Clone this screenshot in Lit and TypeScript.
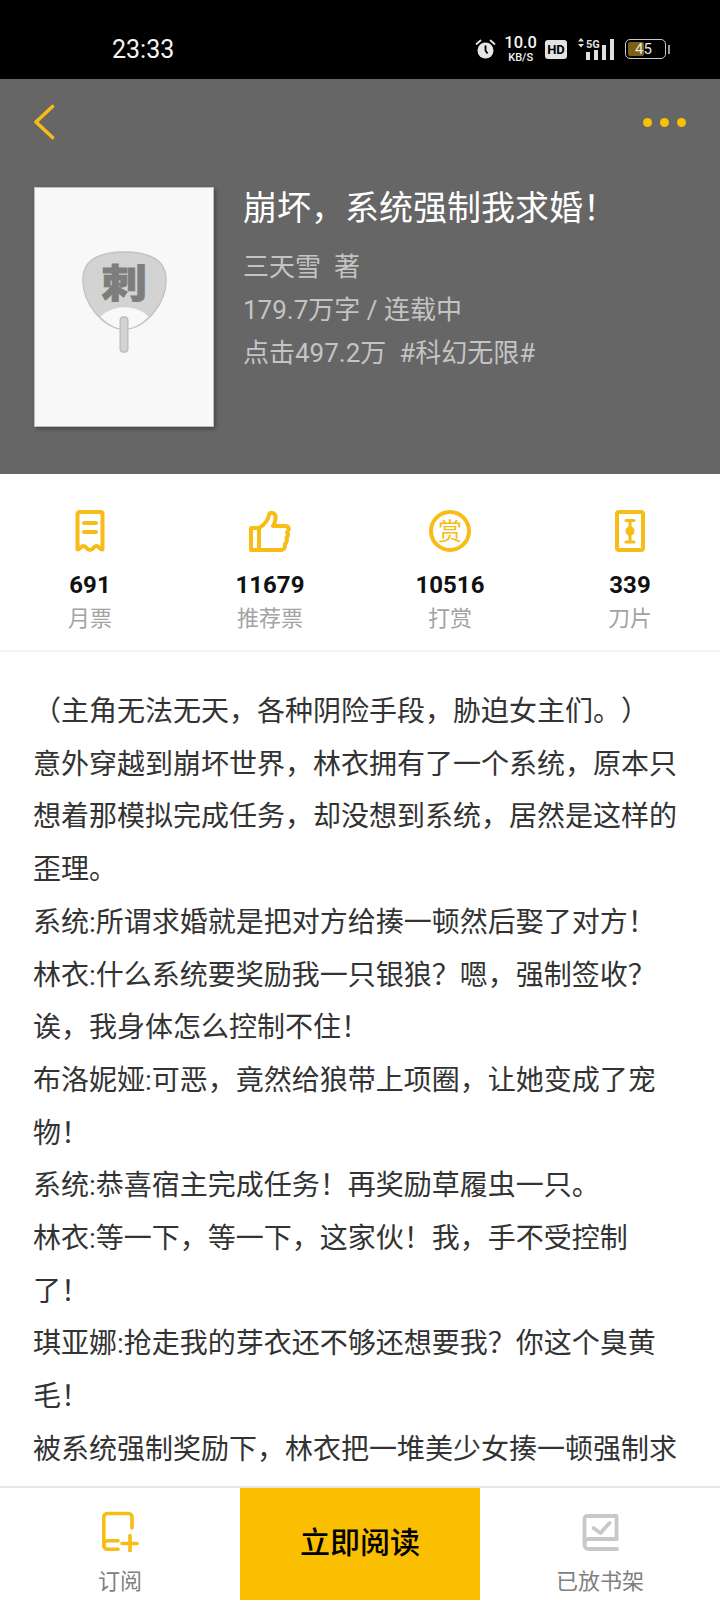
import { LitElement, css, html, svg } from 'lit'
import { customElement } from 'lit/decorators.js'

const YELLOW = '#f7bc16'

const STATS = [
  { value: '691', label: '月票', icon: 'receipt' },
  { value: '11679', label: '推荐票', icon: 'thumb' },
  { value: '10516', label: '打赏', icon: 'coin' },
  { value: '339', label: '刀片', icon: 'blade' },
]

// the screenshot stops at the bottom bar, so the last line ends mid sentence
const DESCRIPTION = [
  '（主角无法无天，各种阴险手段，胁迫女主们。）',
  '意外穿越到崩坏世界，林衣拥有了一个系统，原本只想着那模拟完成任务，却没想到系统，居然是这样的歪理。',
  '系统:所谓求婚就是把对方给揍一顿然后娶了对方！',
  '林衣:什么系统要奖励我一只银狼？嗯，强制签收？诶，我身体怎么控制不住！',
  '布洛妮娅:可恶，竟然给狼带上项圈，让她变成了宠物！',
  '系统:恭喜宿主完成任务！再奖励草履虫一只。',
  '林衣:等一下，等一下，这家伙！我，手不受控制了！',
  '琪亚娜:抢走我的芽衣还不够还想要我？你这个臭黄毛！',
  '被系统强制奖励下，林衣把一堆美少女揍一顿强制求',
]

function statIcon(name: string) {
  switch (name) {
    case 'receipt':
      return svg`<svg class="stat-icon" width="30" height="42" viewBox="0 0 30 42" fill="none" stroke=${YELLOW} stroke-width="4" stroke-linecap="round" stroke-linejoin="round">
        <path d="M2.5 39.5V4a2 2 0 0 1 2-2h21a2 2 0 0 1 2 2v35.5c-3 0-3.500-3.500-6-3.500s-3.500 4-6.500 4-4-4-6.500-4-3.500 3.500-6 3.500z"></path>
        <path d="M9 13h12M9 22h12"></path>
      </svg>`
    case 'thumb':
      return svg`<svg class="stat-icon" width="42" height="42" viewBox="0 0 42 42" fill="none" stroke=${YELLOW} stroke-width="4" stroke-linecap="round" stroke-linejoin="round">
        <path d="M2 18h8v22H2z"></path>
        <path d="M10 18c5-3 9-7 10-13 .5-3 6-3 6.500 1 .4 3-1 8-2.500 10h12c3.500 0 4.500 3 3 5l-1 1.500 1 1.500c.5 2-.5 3-1.500 4l.5 2c0 2-1 3-2 4v1.500c0 2.500-1.500 4.500-4 4.500H10"></path>
      </svg>`
    case 'coin':
      return svg`<svg class="stat-icon" width="42" height="42" viewBox="0 0 42 42">
        <circle cx="21" cy="21" r="19" fill="none" stroke=${YELLOW} stroke-width="4"></circle>
        <text x="21" y="29.500" text-anchor="middle" font-size="24" fill=${YELLOW} font-family="'Noto Sans CJK SC', sans-serif">赏</text>
      </svg>`
    default:
      return svg`<svg class="stat-icon" width="30" height="42" viewBox="0 0 30 42">
        <rect x="2" y="2" width="26" height="38" rx="2" fill="none" stroke=${YELLOW} stroke-width="4"></rect>
        <path d="M11 10.500h8M11 32h8" stroke=${YELLOW} stroke-width="3" stroke-linecap="round"></path>
        <path d="M13.500 10.500h3v6c2 1 3 2.500 3 4.500s-1 3.500-3 4.500v6h-3v-6c-2-1-3-2.500-3-4.500s1-3.500 3-4.500z" fill=${YELLOW}></path>
      </svg>`
  }
}

@customElement('app-root')
export class AppRoot extends LitElement {
  static styles = css`
    :host {
      display: block;
      width: 720px;
      height: 1600px;
      font-family: 'Roboto', 'Noto Sans CJK SC', sans-serif;
      text-spacing-trim: space-all;
    }

    .page {
      display: flex;
      flex-direction: column;
      height: 1600px;
      overflow: hidden;
      background: #fff;
    }

    .status {
      display: flex;
      align-items: center;
      flex: none;
      height: 79px;
      padding: 19px 50px 0 112px;
      box-sizing: border-box;
      background: #000;
      color: #f4f4f4;
    }

    .time {
      font-size: 25px;
    }

    .status-icons {
      display: flex;
      align-items: center;
      margin-left: auto;
    }

    .speed {
      display: flex;
      flex-direction: column;
      align-items: center;
      margin-left: 8px;
      font-weight: 500;
      line-height: 1;
    }

    .speed b {
      font-size: 16.500px;
      font-weight: 500;
    }

    .speed span {
      font-size: 11px;
    }

    .hd {
      display: flex;
      align-items: center;
      justify-content: center;
      width: 22px;
      height: 19px;
      margin-left: 8px;
      border-radius: 3px;
      background: #e3e3e3;
      color: #000;
      font-size: 13px;
      font-weight: 700;
    }

    .signal {
      margin-left: 8px;
    }

    .battery {
      display: flex;
      align-items: stretch;
      position: relative;
      width: 41px;
      height: 20px;
      margin-left: 10px;
      padding: 2px;
      box-sizing: border-box;
      border: 1.500px solid #c8c8c8;
      border-radius: 5px;
    }

    .battery i {
      display: block;
      width: 16px;
      border-radius: 2px;
      background: #7b5f12;
    }

    .battery span {
      position: absolute;
      left: 9px;
      top: -1px;
      font-size: 15px;
      line-height: 20px;
      color: #e8e8e8;
    }

    .nub {
      width: 2px;
      height: 9px;
      margin-left: 2px;
      background: #9a9a9a;
    }

    .hero {
      flex: none;
      height: 395px;
      box-sizing: border-box;
      padding: 0 34px;
      background: #666;
    }

    .nav {
      display: flex;
      align-items: center;
      justify-content: space-between;
      height: 108px;
      padding-bottom: 22px;
      box-sizing: border-box;
    }

    .dots {
      display: flex;
      gap: 8px;
    }

    .dots i {
      width: 9px;
      height: 9px;
      border-radius: 50%;
      background: #f9bf00;
    }

    .book {
      display: flex;
      gap: 29px;
    }

    .cover {
      display: flex;
      justify-content: center;
      flex: none;
      width: 180px;
      height: 240px;
      box-sizing: border-box;
      padding-top: 63px;
      background: #f8f8f8;
      border: 1px solid #bdbdbd;
      box-shadow: 2px 2px 4px rgba(0, 0, 0, 0.3);
    }

    .info {
      min-width: 0;
    }

    .title {
      margin: 0 0 17px;
      font-size: 34px;
      line-height: 42px;
      font-weight: 400;
      color: #fff;
    }

    .meta {
      font-size: 26px;
      line-height: 43px;
      color: #c4c4c4;
    }

    .stats {
      display: grid;
      grid-template-columns: repeat(4, 1fr);
      flex: none;
      height: 178px;
      box-sizing: border-box;
      padding-top: 36px;
      border-bottom: 2px solid #f4f4f4;
    }

    .stat {
      display: flex;
      flex-direction: column;
      align-items: center;
    }

    .stat-icon {
      display: block;
      height: 42px;
    }

    .value {
      margin-top: 18px;
      font-size: 24px;
      line-height: 30px;
      font-weight: 700;
      color: #111;
    }

    .label {
      margin-top: 4px;
      font-size: 22px;
      line-height: 30px;
      color: #a3a3a3;
    }

    .desc {
      flex: 1;
      min-height: 0;
      overflow: hidden;
      padding: 34px 37px 0 33px;
      font-size: 28px;
      line-height: 52.700px;
      color: #333;
    }

    .desc p {
      margin: 0;
    }

    .bar {
      display: grid;
      grid-template-columns: 240px 240px 240px;
      flex: none;
      height: 114px;
      box-sizing: border-box;
      border-top: 2px solid #e6e6e6;
    }

    .action {
      display: flex;
      flex-direction: column;
      align-items: center;
      padding-top: 22px;
      font-size: 22px;
      color: #808080;
    }

    .action svg {
      display: block;
    }

    .action span {
      margin-top: 14px;
      line-height: 32px;
    }

    .read {
      display: flex;
      align-items: center;
      justify-content: center;
      padding-bottom: 8px;
      background: #f9bf00;
      font-size: 30px;
      font-weight: 500;
      color: #000;
    }
  `

  render() {
    return html`
      <div class="page">
        <div class="status">
          <span class="time">23:33</span>
          <div class="status-icons">
            <svg width="21" height="20" viewBox="0 0 21 20">
              <circle cx="10.500" cy="11.500" r="8" fill="#e6e6e6"></circle>
              <path d="M1.500 5l4-3.500M19.500 5l-4-3.500" stroke="#e6e6e6" stroke-width="1.800" stroke-linecap="round"></path>
              <path d="M10.500 6.500v5l2 3" stroke="#000" stroke-width="1.800" fill="none"></path>
            </svg>
            <div class="speed"><b>10.0</b><span>KB/S</span></div>
            <div class="hd">HD</div>
            <svg class="signal" width="40" height="22" viewBox="0 0 40 22" fill="#e0e0e0">
              <path d="M3 3.500l3-3.500 3 3.500zM3 6l3 3.500L9 6z"></path>
              <text x="11" y="10" font-size="11" font-weight="700" font-family="Roboto, sans-serif">5G</text>
              <rect x="11" y="14" width="4" height="8"></rect>
              <rect x="19" y="12" width="4" height="10"></rect>
              <rect x="27" y="7" width="4" height="15"></rect>
              <rect x="35" y="1" width="4" height="21"></rect>
            </svg>
            <div class="battery"><i></i><span>45</span></div>
            <div class="nub"></div>
          </div>
        </div>

        <div class="hero">
          <div class="nav">
            <svg width="22" height="36" viewBox="0 0 22 36" fill="none" stroke="#f7bc16" stroke-width="3.600" stroke-linecap="round" stroke-linejoin="round">
              <path d="M18.500 2.500L2 18l16.500 15.500"></path>
            </svg>
            <div class="dots"><i></i><i></i><i></i></div>
          </div>
          <div class="book">
            <div class="cover">
              <svg width="85" height="102" viewBox="188 243 254 306">
                <path d="M314 246C400 246 440 275 440 330C440 400 380 475 314 478C250 475 190 400 190 330C190 275 230 246 314 246Z" fill="#d3d3d3" stroke="#c2c2c2" stroke-width="4"></path>
                <path d="M243 440C265 420 290 412 314 412C340 412 365 420 388 440C365 462 340 476 314 476C290 476 265 462 243 440Z" fill="#f8f8f8"></path>
                <rect x="302" y="441" width="23" height="105" rx="10" fill="#d3d3d3" stroke="#bcbcbc" stroke-width="4"></rect>
                <text transform="translate(314 382) scale(1 0.85)" text-anchor="middle" font-size="136" font-weight="900" fill="#7d7d7d" stroke="#7d7d7d" stroke-width="3" font-family="'Noto Sans CJK SC', sans-serif">刺</text>
              </svg>
            </div>
            <div class="info">
              <h1 class="title">崩坏，系统强制我求婚！</h1>
              <div class="meta">三天雪&nbsp;&nbsp;著</div>
              <div class="meta">179.7万字 / 连载中</div>
              <div class="meta">点击497.2万&nbsp;&nbsp;#科幻无限#</div>
            </div>
          </div>
        </div>

        <div class="stats">
          ${STATS.map(
            (stat) => html`
              <div class="stat">
                ${statIcon(stat.icon)}
                <div class="value">${stat.value}</div>
                <div class="label">${stat.label}</div>
              </div>
            `,
          )}
        </div>

        <div class="desc">
          ${DESCRIPTION.map((line) => html`<p>${line}</p>`)}
        </div>

        <div class="bar">
          <div class="action">
            <svg width="38" height="42" viewBox="0 0 38 42" fill="none" stroke="#f7bc16" stroke-width="3.600" stroke-linecap="round" stroke-linejoin="round">
              <path d="M31 18V7a3.500 3.500 0 0 0-3.500-3.500H6.300A3.500 3.500 0 0 0 2.800 7v28.500a3.800 3.800 0 0 0 3.800 3.800H17"></path>
              <path d="M17 30.700H6.600a3.800 3.800 0 0 0-3.800 3.800"></path>
              <path d="M29 25.500v16M21 33.500h15"></path>
            </svg>
            <span>订阅</span>
          </div>
          <div class="read">立即阅读</div>
          <div class="action">
            <svg width="37" height="42" viewBox="0 0 37 42" fill="none" stroke="#c8c8c8" stroke-width="3.800" stroke-linecap="round" stroke-linejoin="round">
              <path d="M34.500 29V6H5a2.500 2.500 0 0 0-2.500 2.500V35a4 4 0 0 0 4 4h28.500"></path>
              <path d="M34.500 29H6.500a4 4 0 0 0-4 4"></path>
              <path d="M11.500 18l7 5 9-10"></path>
            </svg>
            <span>已放书架</span>
          </div>
        </div>
      </div>
    `
  }
}
